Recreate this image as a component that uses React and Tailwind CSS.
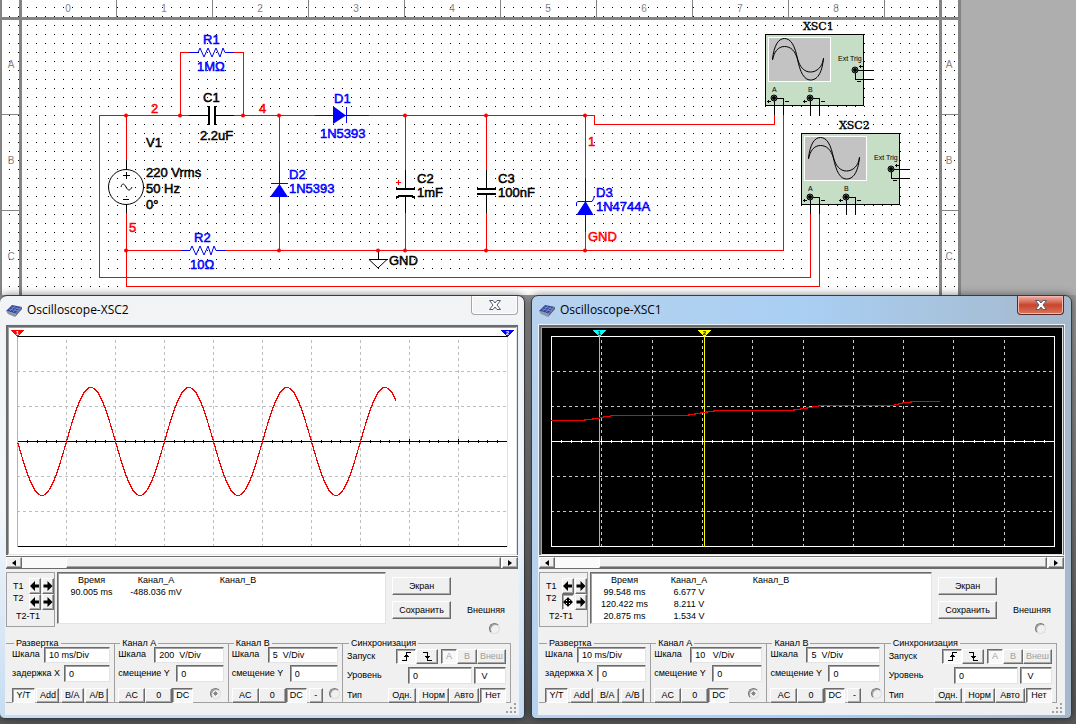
import React from 'react'

const UI_FONT = "font-['Liberation_Sans',Arial,sans-serif]"

const rulerNumbers = [0, 1, 2, 3, 4, 5, 6, 7, 8]
const rulerLetters = ['A', 'B', 'C']

const junctions = [
  [126, 115], [180, 115], [243, 115], [279, 115], [405, 115], [486, 115], [585, 115],
  [126, 250], [279, 250], [378, 250], [405, 250], [486, 250], [585, 250],
]

const circuitLabels = [
  { x: 203, y: 44, text: 'R1', color: '#0000ff' },
  { x: 197, y: 71, text: '1MΩ', color: '#0000ff' },
  { x: 203, y: 102, text: 'C1', color: '#000' },
  { x: 200, y: 140, text: '2.2uF', color: '#000' },
  { x: 151, y: 113, text: '2', color: '#ff0000' },
  { x: 259, y: 113, text: '4', color: '#ff0000' },
  { x: 146, y: 147, text: 'V1', color: '#000' },
  { x: 146, y: 177, text: '220 Vrms', color: '#000' },
  { x: 146, y: 193, text: '50 Hz', color: '#000' },
  { x: 146, y: 209, text: '0°', color: '#000' },
  { x: 129, y: 232, text: '5', color: '#ff0000' },
  { x: 194, y: 242, text: 'R2', color: '#0000ff' },
  { x: 190, y: 269, text: '10Ω', color: '#0000ff' },
  { x: 334, y: 103, text: 'D1', color: '#0000ff' },
  { x: 320, y: 138, text: '1N5393', color: '#0000ff' },
  { x: 289, y: 179, text: 'D2', color: '#0000ff' },
  { x: 289, y: 193, text: '1N5393', color: '#0000ff' },
  { x: 417, y: 183, text: 'C2', color: '#000' },
  { x: 417, y: 197, text: '1mF', color: '#000' },
  { x: 498, y: 183, text: 'C3', color: '#000' },
  { x: 498, y: 197, text: '100nF', color: '#000' },
  { x: 588, y: 146, text: '1', color: '#ff0000' },
  { x: 596, y: 197, text: 'D3', color: '#0000ff' },
  { x: 596, y: 211, text: '1N4744A', color: '#0000ff' },
  { x: 588, y: 241, text: 'GND', color: '#ff0000' },
  { x: 389, y: 265, text: 'GND', color: '#000' },
]

const Jack = ({ x, y }) => (
  <g>
    <circle cx={x} cy={y} r="3" fill="#8a958a" stroke="#000" />
    <circle cx={x} cy={y} r="2" fill="#000" />
  </g>
)

// Small instrument symbol on the schematic
const ScopeSymbol = ({ x, y, name }) => (
  <g transform={`translate(${x} ${y})`}>
    <text x="38" y="-4" fontSize="11" stroke="#000" strokeWidth="0.4" fontFamily="DejaVu Serif, serif">{name}</text>
    <g shapeRendering="crispEdges">
      <rect x="0.5" y="0.5" width="98" height="71" fill="#c5dec5" stroke="#000" />
      <rect x="3.5" y="3.5" width="62" height="44" fill="#c3c3c3" stroke="#fff" />
    </g>
    <g fill="none" stroke="#000">
      <path d="M7.500 25C9 12 13 4.500 19.500 4.500S30 12 32.500 25S39 46 45.500 46S57 40 58.500 24" />
      <path d="M7.500 26C9 18 13 12.500 19.500 12.500S30 17 32.500 25S39 38 45.500 38S57 33 58.500 25" />
    </g>
    <path
      d="M9.500 64V81M11 64.500H18.500V81M45.500 64V81M47 64.500H54.500V81M90 36.500H109M90.500 37V45.500H109M2 67.500H6M3.500 66V69M20 67.500H24M38 67.500H42M39.500 66V69M56 67.500H60M94 32.500H98M95.500 31V34M92 47.500H96"
      fill="none" stroke="#000" shapeRendering="crispEdges"
    />
    <Jack x={9} y={64} />
    <Jack x={45} y={64} />
    <Jack x={90} y={36} />
    <g fontSize="7">
      <text x="73" y="27">Ext Trig</text>
      <text x="7" y="58">A</text>
      <text x="43" y="58">B</text>
    </g>
  </g>
)

const Schematic = () => (
  <svg width="961" height="295" viewBox="0 0 961 295" className="block shrink-0" fontFamily="Liberation Sans, Arial, sans-serif">
    <defs>
      <pattern id="dots" width="9" height="9" patternUnits="userSpaceOnUse">
        <rect x="0" y="7" width="1" height="1" fill="#000" />
      </pattern>
    </defs>
    <rect width="961" height="295" fill="#fff" />
    <rect width="958" height="295" fill="url(#dots)" shapeRendering="crispEdges" />

    {/* Sheet frame and rulers */}
    <g fill="#848484" shapeRendering="crispEdges">
      <rect x="0" y="0" width="2" height="295" />
      <rect x="19" y="0" width="3" height="295" />
      <rect x="939" y="0" width="3" height="295" />
      <rect x="958" y="0" width="3" height="295" />
      <rect x="0" y="17" width="961" height="3" />
      {rulerNumbers.map((n) => <rect key={n} x={116 + n * 96} y="0" width="1" height="17" />)}
      {[114, 210].map((y) => (
        <React.Fragment key={y}>
          <rect x="0" y={y} width="19" height="1" />
          <rect x="942" y={y} width="16" height="1" />
        </React.Fragment>
      ))}
    </g>
    <g fill="#848484" fontSize="10" textAnchor="middle">
      {rulerNumbers.map((n) => <text key={n} x={68 + n * 96} y="12">{n}</text>)}
      {rulerLetters.map((l, i) => (
        <React.Fragment key={l}>
          <text x="11" y={68 + i * 96}>{l}</text>
          <text x="949" y={68 + i * 96}>{l}</text>
        </React.Fragment>
      ))}
    </g>

    {/* Wires */}
    <g fill="none" stroke="#ff0000" shapeRendering="crispEdges">
      <path d="M189 115.500H99.500V277.500H810.500V214" />
      <path d="M126.500 115V160M126.500 213V286.500H819.500V214" />
      <path d="M180.500 115V52.500H189M234 52.500H243.500V115" />
      <path d="M234 115.500H315M369 115.500H594.500V124.500H774.500V115" />
      <path d="M126 250.500H181M226 250.500H783.500V115" />
      <path d="M279.500 115V161M279.500 213V250M405.500 115V170M405.500 213V250M486.500 115V170M486.500 213V250M585.500 115V178M585.500 232V250" />
      <path d="M396 182.500H401M398.500 180V185" />
    </g>

    {/* Black parts: source, capacitors, ground */}
    <g fill="none" stroke="#000">
      <path d="M189 115.500H208M216 115.500H234M126.500 160V169M126.500 204V213M405.500 170V188M405.500 197V213M486.500 170V188M486.500 195V213M378.500 250V259M123 175.500H130M126.500 172V179M123 199.500H129" shapeRendering="crispEdges" />
      <circle cx="126" cy="187" r="17.5" />
      <path d="M121 187C122 183 124 183 126 187S130 191 132 187" />
      <path d="M369 259.500H387L378 268Z" />
    </g>
    <g fill="#000" shapeRendering="crispEdges">
      <rect x="208" y="106" width="2" height="19" />
      <rect x="214" y="106" width="2" height="19" />
      <rect x="396" y="188" width="19" height="2" />
      <rect x="477" y="188" width="19" height="2" />
      <rect x="477" y="193" width="19" height="2" />
      <path d="M396 197L399 195H412L415 197V199L411 197H400L396 199Z" />
    </g>

    {/* Resistors and diodes */}
    <g fill="none" stroke="#0000ff">
      <path d="M189 52.500H198L200 48L204 57L208 48L212 57L216 48L220 57L223 48L225 52.500H234" />
      <path d="M181 250.500H190L192 246L196 255L200 246L204 255L208 246L211 255L214 246L216 250.500H226" />
      <path d="M315 115.500H369M346.500 107V123M279.500 161V213M271 183.500H288M585.500 178V232" shapeRendering="crispEdges" />
      <path d="M576.500 205V202.500L578 201.500H592L594 198V196" />
    </g>
    <g fill="#0000ff">
      <path d="M333 106L346 115.500L333 124Z" />
      <path d="M270 197L279.500 184L288 197Z" />
      <path d="M576.500 215L585.500 201L593.500 215Z" />
    </g>

    {junctions.map(([x, y]) => <circle key={`${x}-${y}`} cx={x} cy={y + 0.5} r="2" fill="#ff0000" />)}

    <g fontSize="13" strokeWidth="0.5">
      {circuitLabels.map((l, i) => (
        <text key={i} x={l.x} y={l.y} fill={l.color} stroke={l.color}>{l.text}</text>
      ))}
    </g>

    <ScopeSymbol x={765} y={34} name="XSC1" />
    <ScopeSymbol x={801} y={133} name="XSC2" />
  </svg>
)

const sinePoints = () => {
  const pts = []
  for (let x = 12; x <= 390; x += 1) {
    pts.push(`${x},${(116.5 + 54 * Math.sin((2 * Math.PI * (x - 11.5)) / 98)).toFixed(1)}`)
  }
  return pts.join(' ')
}

const scopes = {
  XSC2: {
    width: 512, left: 11, step: 49, bg: '#fff', line: '#000', grid: '#bdbdbd',
    trace: sinePoints(),
    cursors: [{ x: 11, mark: '#ff0000', line: '#00ffff', n: '1', ink: '#fff' }, { x: 501, mark: '#0000ff', line: '#ffff00', n: '2', ink: '#fff' }],
    rows: [['90.005 ms', '-488.036 mV', '']],
    scaleA: '200  V/Div',
  },
  XSC1: {
    width: 525, left: 12, step: 50.3, bg: '#000', line: '#fff', grid: '#c8c8c8',
    trace: '12,95.500 42,95.500 54,94 61,93 67,91.500 76,90.500 147,90.500 156,89 165,87.500 171,86.500 180,85.500 252,85.500 268,83 282,80.500 354,80.500 363,78 376,76.500 401,76.500',
    cursors: [{ x: 60, mark: '#00ffff', line: '#00ffff', n: '1', ink: '#000' }, { x: 165, mark: '#ffff00', line: '#ffff00', n: '2', ink: '#000' }],
    rows: [['99.548 ms', '6.677 V', ''], ['120.422 ms', '8.211 V', ''], ['20.875 ms', '1.534 V', '']],
    scaleA: '10   V/Div',
  },
}

const Plot = ({ scope }) => {
  const { left, step, width } = scope
  const right = left + Math.round(step * 10)
  const divs = [1, 2, 3, 4, 5, 6, 7, 8, 9]
  const ticks = Array.from({ length: 49 }, (_, i) => i + 1)
  return (
    <svg viewBox={`0 0 ${width} 230`} preserveAspectRatio="none" className="block h-[230px] w-full" shapeRendering="crispEdges">
      <rect width={width} height="230" fill={scope.bg} />
      <g fill="none" stroke={scope.grid} strokeDasharray="3 3">
        {divs.map((d) => <path key={d} d={`M${left + Math.round(step * d) + 0.5} 15V221`} />)}
        {[46.5, 81.5, 151.5, 186.5].map((y) => <path key={y} d={`M${left} ${y}H${right}`} />)}
      </g>
      <path d={`M${left} 11.500H${right + 1}M${left} 116.500H${right}M${left} 221.500H${right + 1}`} stroke={scope.line} />
      <path d={`M${left + 0.5} 11V221M${right + 0.5} 11V221`} stroke={scope.line} />
      {ticks.map((t) => (
        <rect key={t} x={left + Math.round((t * step) / 5)} y={t % 5 ? 115 : 114} width="1" height={t % 5 ? 3 : 5} fill={scope.line} />
      ))}
      {scope.cursors.map((c) => (
        <g key={c.n}>
          <rect x={c.x} y="11" width="1" height="211" fill={c.line} />
          <path d={`M${c.x - 6} 5H${c.x + 7}L${c.x + 0.5} 12Z`} fill={c.mark} />
          <text x={c.x + 0.5} y="10" textAnchor="middle" fontSize="6" fontWeight="bold" fontFamily="Liberation Sans" fill={c.ink}>{c.n}</text>
        </g>
      ))}
      <polyline points={scope.trace} fill="none" stroke="#f00000" strokeWidth="1.2" />
      {/* sunken bevel */}
      <path d={`M0 1H${width}M1 0V230`} stroke="#6b6b6b" strokeWidth="2" fill="none" />
      <path d={`M2 2.500H${width}M2.500 2V230`} stroke="#a0a0a0" fill="none" />
      <path d={`M${width - 0.5} 0V230`} stroke="#6b6b6b" />
      <path d={`M${width - 1.5} 2V229.500H2`} stroke="#e3e3e3" fill="none" />
    </svg>
  )
}

const raised = 'border border-t-white border-l-white border-r-[#6b6b6b] border-b-[#6b6b6b] bg-[#f0f0f0] shadow-[inset_-1px_-1px_#a8a8a8]'
const pressed = 'border border-t-[#6b6b6b] border-l-[#6b6b6b] border-r-white border-b-white bg-[#f8f8f8] shadow-[inset_1px_1px_#a8a8a8]'

const Btn = ({ children, active, disabled, label, className = '' }) => (
  <button
    type="button"
    disabled={disabled}
    aria-label={label}
    className={`flex items-center justify-center leading-none whitespace-nowrap ${active ? pressed : raised} ${disabled ? 'text-[#a0a0a0]' : 'text-black'} ${className}`}
  >
    {children}
  </button>
)

const inputStyle = 'min-w-0 rounded-none border border-t-[#6b6b6b] border-l-[#6b6b6b] border-r-[#e3e3e3] border-b-[#e3e3e3] bg-white pl-1 shadow-[inset_1px_1px_#a0a0a0] outline-none'

const Field = ({ label, value, labelClass = '', className = '' }) => (
  <label className={`flex items-center gap-1 ${className}`}>
    <span className={`whitespace-nowrap ${labelClass}`}>{label}</span>
    <input type="text" defaultValue={value} className={`h-full flex-1 whitespace-pre ${inputStyle}`} />
  </label>
)

const Radio = ({ label, name, checked, disabled }) => (
  <input
    type="radio"
    name={name}
    aria-label={label}
    defaultChecked={checked}
    disabled={disabled}
    className="h-[11px] w-[11px] appearance-none rounded-full border border-t-[#777] border-l-[#777] border-r-[#ddd] border-b-[#ddd] bg-[#f0f0f0] shadow-[inset_1px_1px_#a0a0a0] checked:bg-radial checked:from-[#888] checked:from-30% checked:to-[#f0f0f0] checked:to-35%"
  />
)

const Group = ({ title, children, legendClass = 'ml-2' }) => (
  <fieldset className="h-16 min-w-0 border-y border-r border-[#a0a0a0]">
    <legend className={`h-2 px-[2px] leading-2 whitespace-nowrap ${legendClass}`}>{title}</legend>
    {children}
  </fieldset>
)

const Channel = ({ letter, scale, id }) => (
  <Group title={`Канал ${letter}`} legendClass="ml-[5px]">
    <div className="flex flex-col gap-[2px] pr-1 pl-[3px]">
      <Field label="Шкала" value={scale} labelClass="min-w-8" className="h-4" />
      <Field label="смещение Y" value="0" labelClass="min-w-[54px]" className="h-[17px]" />
    </div>
    <div className="mt-[6px] flex h-[15px] items-stretch pr-[2px] pl-[3px]">
      <Btn className="w-[27px]">AC</Btn>
      <Btn className="w-[27px]">0</Btn>
      <Btn active className="w-[21px]">DC</Btn>
      {letter === 'B' && <Btn className="ml-[2px] w-[14px]">-</Btn>}
      <div className={letter === 'B' ? 'ml-auto' : 'mr-[5px] ml-auto'}>
        <Radio name={`${id}-source`} label={`Канал ${letter}`} checked={letter === 'A'} />
      </div>
    </div>
  </Group>
)

const EdgeIcon = ({ falling }) => (
  <svg width="11" height="11" viewBox="0 0 11 11" fill="none" stroke="#000" shapeRendering="crispEdges">
    {falling
      ? <path d="M1 1.500H5.500V9.500H10M3 5.500H8M4 6.500H7" />
      : <path d="M1 9.500H5.500V1.500H10M3 5.500H8M4 4.500H7" />}
  </svg>
)

const Arrow = ({ dir }) => (
  <svg width="10" height="10" viewBox="0 0 10 10" fill="#000" className="shrink-0">
    {dir === 'left' && <path d="M0 5L5 0V3.500H9V6.500H5V10Z" />}
    {dir === 'right' && <path d="M9.500 5L4.500 0V3.500H.5V6.500H4.500V10Z" />}
    {dir === 'both' && <path d="M0 5L3 2V4H4V3H2.500L5 0L7.500 3H6V4H7V2L10 5L7 8V6H6V7H7.500L5 10L2.500 7H4V6H3V8Z" />}
  </svg>
)

const Readout = ({ id, rows }) => (
  <div className="flex h-[55px] gap-[2px]">
    <div className="w-[49px] shrink-0 border border-[#a0a0a0] pt-[5px] pl-[6px]">
      <div className="flex justify-between">
        <div className="leading-3">
          <p className="mt-[2px]">T1</p>
          <p>T2</p>
        </div>
        <div className="grid grid-cols-2 gap-x-[1px]">
          <Btn label="T1 left" className="h-4 w-3"><Arrow dir="left" /></Btn>
          <Btn label="T1 right" className="h-4 w-3"><Arrow dir="right" /></Btn>
          <Btn label="T2 left" className="h-4 w-3" active={id === 'XSC1'}><Arrow dir={id === 'XSC1' ? 'both' : 'left'} /></Btn>
          <Btn label="T2 right" className="h-4 w-3"><Arrow dir="right" /></Btn>
        </div>
      </div>
      <p className="pl-[3px] leading-3">T2-T1</p>
    </div>
    <div className="h-[52px] min-w-0 flex-1 border border-t-[#6b6b6b] border-l-[#6b6b6b] border-r-[#e3e3e3] border-b-[#e3e3e3] bg-white shadow-[inset_1px_1px_#a0a0a0]">
      <table className="table-fixed border-collapse text-center leading-3 whitespace-nowrap">
        <thead>
          <tr>
            <th className="w-[67px] p-0 pt-[1px] font-normal">Время</th>
            <th className="w-[62px] p-0 pt-[1px] font-normal">Канал_A</th>
            <th className="w-[102px] p-0 pt-[1px] font-normal">Канал_B</th>
          </tr>
        </thead>
        <tbody>
          {rows.map((row) => (
            <tr key={row[0]}>
              {row.map((cell, i) => <td key={i} className="p-0">{cell}</td>)}
            </tr>
          ))}
        </tbody>
      </table>
    </div>
    <div className="ml-1 flex w-[59px] shrink-0 flex-col gap-[6px] pt-[5px]">
      <Btn className="h-[18px]">Экран</Btn>
      <Btn className="h-[18px]">Сохранить</Btn>
    </div>
    <label className="mr-[13px] ml-[14px] flex shrink-0 flex-col items-end gap-[7px] pt-8 leading-3">
      Внешняя
      <span className="mr-[5px] flex"><Radio name={`${id}-source`} label="Внешняя" /></span>
    </label>
  </div>
)

const ScrollBar = () => (
  <div className="flex h-[13px] items-stretch border-y border-[#6b6b6b] bg-[#fafafa]">
    <Btn label="Scroll left" className="w-4"><svg width="4" height="6" viewBox="0 0 4 6"><path d="M4 0V6L0 3Z" /></svg></Btn>
    <div className={`ml-11 flex-1 ${raised}`} />
    <Btn label="Scroll right" className="ml-[1px] w-4"><svg width="4" height="6" viewBox="0 0 4 6"><path d="M0 0V6L4 3Z" /></svg></Btn>
  </div>
)

const ScopeIcon = () => (
  <svg width="16" height="13" viewBox="0 0 16 13">
    <path d="M0 7L6 1L16 3L10 10Z" fill="#33479c" />
    <path d="M0 7L10 10L9 13L2 10Z" fill="#8d93a8" />
    <path d="M10 10L16 3V5L9 13Z" fill="#5b5568" />
    <path d="M3 5L13 7M5 3L14 5M3 8L9 2M6 9L12 3M9 10L15 3" stroke="#93a6de" strokeWidth="0.6" />
  </svg>
)

const ScopeWindow = ({ id, active }) => {
  const scope = scopes[id]
  return (
    <section
      className={`flex min-w-0 flex-col self-start rounded-t-[7px] rounded-b-[5px] border border-[#383c42] pb-1 shadow-[0_0_8px_rgba(0,0,0,0.5)] ${
        active
          ? 'bg-linear-to-r from-[#b7d2ee] via-[#a9cff3] to-[#a5b8cc] px-[7px]'
          : 'border-l-0 bg-linear-to-b from-[#f1f3f5] via-[#f3f7fb] to-[#c6dcf2] px-[6px]'
      }`}
    >
      <header className="flex h-[29px] items-start justify-between">
        <div className="flex items-center gap-[5px] pt-[6px]">
          <ScopeIcon />
          <h2 className="font-['Open_Sans','Noto_Sans',sans-serif] text-xs leading-4 text-black">Oscilloscope-{id}</h2>
        </div>
        <button
          type="button"
          aria-label="Close"
          className={`flex h-[19px] w-[47px] items-center justify-center rounded-b-[4px] border border-t-0 ${
            active
              ? 'border-[#5c2a25] bg-linear-to-b from-[#eeb3aa] via-[#c8432c] to-[#d9755c] shadow-[inset_0_0_0_1px_#f3b9b0]'
              : 'border-[#a3a7ac] bg-[#f3f4f6] shadow-[inset_0_0_0_1px_#fff]'
          }`}
        >
          <svg width="12" height="10" viewBox="0 0 12 10">
            <path d="M.5.5H4L6 3L8 .5H11.500L8 5L11.500 9.500H8L6 7L4 9.500H.5L4 5Z" fill="#fff" stroke="#555d70" />
          </svg>
        </button>
      </header>

      <div className={`bg-[#f0f0f0] text-[9px] text-black outline outline-[#e8f1fa] ${UI_FONT}`}>
        <div className="bg-white pb-[1px]"><Plot scope={scope} /></div>
        <ScrollBar />
        <div className="pt-[3px]">
          <Readout id={id} rows={scope.rows} />
        </div>
        <div className="mt-3 grid grid-cols-[110fr_114fr_115fr_169fr] pr-[7px]">
          <Group title="Развертка">
            <div className="flex flex-col gap-[2px] pr-1 pl-[6px]">
              <Field label="Шкала" value="10 ms/Div" labelClass="min-w-7" className="h-4" />
              <Field label="задержка X" value="0" className="h-[17px]" />
            </div>
            <div className="mt-[6px] flex h-[15px] items-stretch justify-between pr-[6px] pl-[6px]">
              <Btn active className="w-[23px]">Y/T</Btn>
              <Btn className="w-[23px]">Add</Btn>
              <Btn className="w-[23px]">B/A</Btn>
              <Btn className="w-[23px]">A/B</Btn>
            </div>
          </Group>
          <Channel letter="A" scale={scope.scaleA} id={id} />
          <Channel letter="B" scale="5  V/Div" id={id} />
          <Group title="Синхронизация" legendClass="ml-[6px]">
            <div className="mt-[2px] flex h-[15px] items-center pr-1 pl-1">
              <span className="mr-auto">Запуск</span>
              <Btn active label="Rising edge" className="h-full w-5"><EdgeIcon /></Btn>
              <Btn label="Falling edge" className="h-full w-[22px]"><EdgeIcon falling /></Btn>
              <Btn active disabled className="ml-[3px] h-full w-4">A</Btn>
              <Btn disabled className="h-full w-5">B</Btn>
              <Btn disabled className="h-full w-[29px]">Внеш</Btn>
            </div>
            <div className="mt-[3px] flex h-[17px] items-center pr-1 pl-1">
              <label htmlFor={`${id}-level`} className="mr-auto">Уровень</label>
              <input id={`${id}-level`} type="text" defaultValue="0" className={`h-full w-[64px] ${inputStyle}`} />
              <input type="text" aria-label="V" defaultValue=" V" className={`ml-[2px] h-full w-8 ${inputStyle}`} />
            </div>
            <div className="mt-1 flex h-[15px] items-center pr-1 pl-1">
              <span className="mr-auto">Тип</span>
              <Btn className="h-full w-7">Одн.</Btn>
              <Btn className="ml-[2px] h-full w-[31px]">Норм</Btn>
              <Btn className="h-full w-[30px]">Авто</Btn>
              <Btn active className="ml-[1px] h-full w-[26px]">Нет</Btn>
            </div>
          </Group>
        </div>
        <div className="flex h-[11px] items-end justify-end p-[1px]">
          <svg width="11" height="10" viewBox="0 0 11 10" fill="#a0a0a0">
            <path d="M8 0h2v2h-2zM4 4h2v2h-2zM8 4h2v2h-2zM0 8h2v2h-2zM4 8h2v2h-2zM8 8h2v2h-2z" />
          </svg>
        </div>
      </div>
    </section>
  )
}

const App = () => {
  return (
    <main className="flex min-h-screen flex-col overflow-hidden bg-[#aeaeae]">
      <Schematic />
      <div className="grid flex-1 grid-cols-[525fr_541fr] gap-[6px] bg-linear-to-b from-[#9a9a9a] to-[#58585a] pr-1">
        <ScopeWindow id="XSC2" />
        <ScopeWindow id="XSC1" active />
      </div>
    </main>
  )
}

export default App
